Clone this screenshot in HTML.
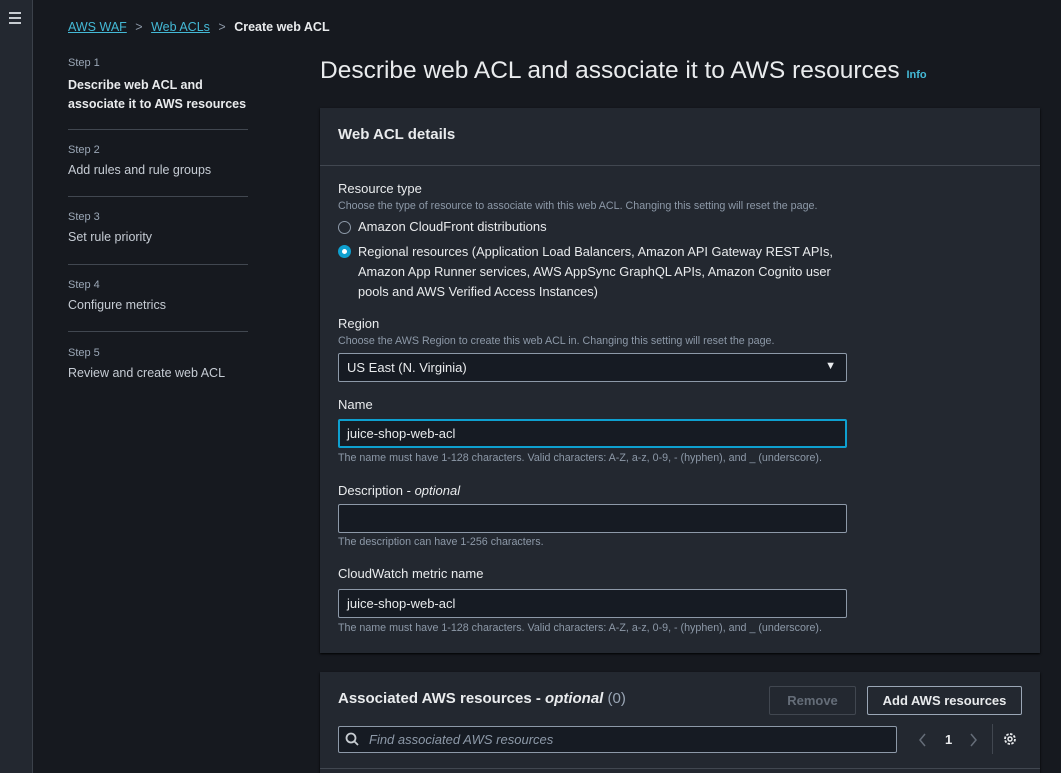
<!DOCTYPE html>
<html><head><style>
*{box-sizing:border-box;margin:0;padding:0}
html,body{width:1061px;height:773px;overflow:hidden}
body{background:#16191f;font-family:"Liberation Sans",sans-serif;color:#d1d5db;position:relative;font-size:13px}
.side{position:absolute;left:0;top:0;width:33px;height:773px;background:#232830;border-right:1px solid #3b414a}
.ham{position:absolute;left:9px;top:12px;width:12px}
.ham i{display:block;height:2px;background:#c7ccd1;margin-bottom:3px}
.a{position:absolute;white-space:nowrap}
.lnk{color:#44b9d6;text-decoration:underline}
.step{color:#9ba7b6;font-size:11px}
.sl{color:#c6ccd4;font-size:12.5px}
.hr{position:absolute;left:68px;width:180px;height:1px;background:#414750}
.panel{position:absolute;left:320px;width:720px;background:#232830;box-shadow:0 1px 2px #000}
.lbl{color:#e9ebed;font-size:13px}
.desc{color:#8d99a8;font-size:10.7px}
.inp{position:absolute;left:338px;width:509px;height:29px;background:#161b23;border:1px solid #8d99a8;border-radius:2px;color:#e9ebed;padding:6px 8px;font-size:13px}
.radio{position:absolute;width:13px;height:13px;border-radius:50%;border:1.5px solid #8d99a8}
.btn{position:absolute;height:29px;border-radius:2px;font-weight:bold;font-size:13px;text-align:center;line-height:27px}
</style></head><body>
<div class="side"><div class="ham"><i></i><i></i><i></i></div></div>
<div class="a" style="left:68px;top:20px;font-size:12.5px"><span class="lnk">AWS WAF</span> <span style="color:#8d99a8;margin:0 5px">&gt;</span> <span class="lnk">Web ACLs</span> <span style="color:#8d99a8;margin:0 5px">&gt;</span> <b style="color:#e9ebed">Create web ACL</b></div>

<div class="a step" style="left:68px;top:57px">Step 1</div>
<div class="a" style="left:68px;top:76px;font-weight:bold;color:#e9ebed;line-height:19px;font-size:12.5px">Describe web ACL and<br>associate it to AWS resources</div>
<div class="hr" style="top:129px"></div>
<div class="a step" style="left:68px;top:144px">Step 2</div>
<div class="a sl" style="left:68px;top:163px">Add rules and rule groups</div>
<div class="hr" style="top:196px"></div>
<div class="a step" style="left:68px;top:211px">Step 3</div>
<div class="a sl" style="left:68px;top:230px">Set rule priority</div>
<div class="hr" style="top:264px"></div>
<div class="a step" style="left:68px;top:279px">Step 4</div>
<div class="a sl" style="left:68px;top:298px">Configure metrics</div>
<div class="hr" style="top:331px"></div>
<div class="a step" style="left:68px;top:347px">Step 5</div>
<div class="a sl" style="left:68px;top:366px">Review and create web ACL</div>

<div class="a" style="left:320px;top:57px;font-size:24.5px;color:#e9ebed">Describe web ACL and associate it to AWS resources <span style="font-size:11px;color:#44b9d6;font-weight:bold">Info</span></div>

<div class="panel" style="top:108px;height:545px"></div>
<div class="a" style="left:338px;top:126px;font-size:15px;font-weight:bold;color:#e9ebed">Web ACL details</div>
<div class="a" style="left:320px;top:165px;width:720px;height:1px;background:#414750"></div>

<div class="a lbl" style="left:338px;top:181px">Resource type</div>
<div class="a desc" style="left:338px;top:200px">Choose the type of resource to associate with this web ACL. Changing this setting will reset the page.</div>
<div class="radio" style="left:338px;top:221px"></div>
<div class="a lbl" style="left:358px;top:219px">Amazon CloudFront distributions</div>
<div class="radio" style="left:338px;top:245px;border:4px solid #0ea0d0;background:#fff"></div>
<div class="a lbl" style="left:358px;top:242px;line-height:20px;font-size:12.8px">Regional resources (Application Load Balancers, Amazon API Gateway REST APIs,<br>Amazon App Runner services, AWS AppSync GraphQL APIs, Amazon Cognito user<br>pools and AWS Verified Access Instances)</div>

<div class="a lbl" style="left:338px;top:316px">Region</div>
<div class="a desc" style="left:338px;top:335px">Choose the AWS Region to create this web ACL in. Changing this setting will reset the page.</div>
<div class="inp" style="top:353px">US East (N. Virginia)<span style="position:absolute;right:10px;top:6px;font-size:11px">▼</span></div>

<div class="a lbl" style="left:338px;top:397px">Name</div>
<div class="inp" style="top:419px;border:2px solid #0ea0d0;padding:5px 7px">juice-shop-web-acl</div>
<div class="a desc" style="left:338px;top:452px">The name must have 1-128 characters. Valid characters: A-Z, a-z, 0-9, - (hyphen), and _ (underscore).</div>

<div class="a lbl" style="left:338px;top:483px">Description - <i>optional</i></div>
<div class="inp" style="top:504px"></div>
<div class="a desc" style="left:338px;top:536px">The description can have 1-256 characters.</div>

<div class="a lbl" style="left:338px;top:566px">CloudWatch metric name</div>
<div class="inp" style="top:589px">juice-shop-web-acl</div>
<div class="a desc" style="left:338px;top:622px">The name must have 1-128 characters. Valid characters: A-Z, a-z, 0-9, - (hyphen), and _ (underscore).</div>

<div class="panel" style="top:672px;height:110px"></div>
<div class="a" style="left:338px;top:690px;font-size:15px;font-weight:bold;color:#e9ebed">Associated AWS resources - <i>optional</i> <span style="font-weight:normal;color:#9ba7b6">(0)</span></div>
<div class="btn" style="left:769px;top:686px;width:87px;border:1px solid #414750;color:#656d78">Remove</div>
<div class="btn" style="left:867px;top:686px;width:155px;border:1px solid #9ba7b6;color:#e9ebed">Add AWS resources</div>
<div class="inp" style="top:726px;width:559px;height:27px;padding:5px 8px 5px 30px;color:#8d99a8;font-style:italic">Find associated AWS resources</div>
<svg class="a" style="left:345px;top:732px" width="14" height="14" viewBox="0 0 14 14"><circle cx="6" cy="6" r="4.5" fill="none" stroke="#c7ccd1" stroke-width="1.8"/><path d="M9.5 9.5 13 13" stroke="#c7ccd1" stroke-width="1.8"/></svg>
<svg class="a" style="left:917px;top:732px" width="12" height="16" viewBox="0 0 12 16"><path d="M8 2 3 8 8 14" fill="none" stroke="#656d78" stroke-width="1.5"/></svg>
<div class="a" style="left:945px;top:732px;color:#e9ebed;font-weight:bold">1</div>
<svg class="a" style="left:967px;top:732px" width="12" height="16" viewBox="0 0 12 16"><path d="M4 2 9 8 4 14" fill="none" stroke="#656d78" stroke-width="1.5"/></svg>
<div class="a" style="left:992px;top:724px;width:1px;height:30px;background:#414750"></div>
<svg class="a" style="left:1003px;top:732px" width="14" height="14" viewBox="0 0 14 14"><circle cx="7" cy="7" r="5" fill="none" stroke="#e9ebed" stroke-width="1.8" stroke-dasharray="2.5 1.4"/><circle cx="7" cy="7" r="2" fill="none" stroke="#e9ebed" stroke-width="1.5"/></svg>
<div class="a" style="left:320px;top:768px;width:720px;height:1px;background:#414750"></div>
</body></html>
